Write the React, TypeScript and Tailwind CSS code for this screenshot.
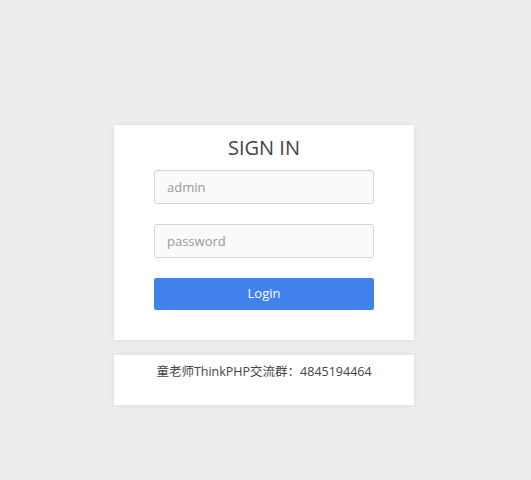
export default function App() {
  return (
    <main
      className="min-h-screen bg-[#ededed] pt-[125px]"
      style={{ fontFamily: '"Open Sans", "Noto Sans CJK SC", sans-serif' }}
    >
      <div className="w-[300px] ml-[114px]">

        <div className="bg-white shadow-[0_0_6px_rgba(0,0,0,0.08)] pt-2 px-10 pb-[30px]">
          <h1 className="text-[20px] leading-[30px] text-[#444] text-center mb-[7px]">
            SIGN IN
          </h1>

          <input
            placeholder="admin"
            className="block w-[220px] h-[34px] bg-[#fafafa] border border-[#d6d6d6] rounded-[3px] px-3 text-[13px] text-[#555] placeholder:text-[#999] outline-none mb-5"
          />

          <input
            type="password"
            placeholder="password"
            className="block w-[220px] h-[34px] bg-[#fafafa] border border-[#d6d6d6] rounded-[3px] px-3 text-[13px] text-[#555] placeholder:text-[#999] outline-none mb-5"
          />

          <button className="block w-[220px] h-[32px] bg-[#4181ec] rounded-[2px] text-white text-[13px]">
            Login
          </button>
        </div>

        <div className="bg-white shadow-[0_0_6px_rgba(0,0,0,0.08)] mt-[15px] h-[50px] pt-2 text-center text-[12.5px] leading-[18px] text-[#444]">
          童老师ThinkPHP交流群：4845194464
        </div>

      </div>
    </main>
  );
}
